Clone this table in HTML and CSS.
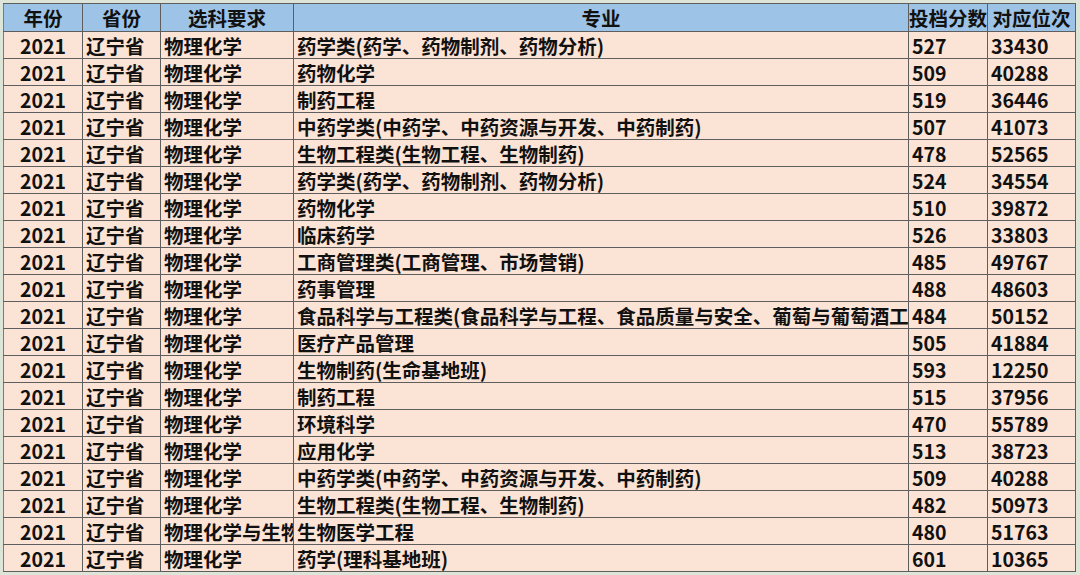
FILE: index.html
```html
<!DOCTYPE html>
<html lang="zh">
<head>
<meta charset="utf-8">
<link rel="stylesheet" href="styles.css">
</head>
<body>
<div class="frame">
<table class="sheet">
<colgroup>
<col class="c1"><col class="c2"><col class="c3"><col class="c4"><col class="c5"><col class="c6">
</colgroup>
<thead>
<tr><th>年份</th><th>省份</th><th>选科要求</th><th>专业</th><th>投档分数</th><th>对应位次</th></tr>
</thead>
<tbody>
<tr><td class="yr">2021</td><td>辽宁省</td><td>物理化学</td><td>药学类(药学、药物制剂、药物分析)</td><td>527</td><td>33430</td></tr>
<tr><td class="yr">2021</td><td>辽宁省</td><td>物理化学</td><td>药物化学</td><td>509</td><td>40288</td></tr>
<tr><td class="yr">2021</td><td>辽宁省</td><td>物理化学</td><td>制药工程</td><td>519</td><td>36446</td></tr>
<tr><td class="yr">2021</td><td>辽宁省</td><td>物理化学</td><td>中药学类(中药学、中药资源与开发、中药制药)</td><td>507</td><td>41073</td></tr>
<tr><td class="yr">2021</td><td>辽宁省</td><td>物理化学</td><td>生物工程类(生物工程、生物制药)</td><td>478</td><td>52565</td></tr>
<tr><td class="yr">2021</td><td>辽宁省</td><td>物理化学</td><td>药学类(药学、药物制剂、药物分析)</td><td>524</td><td>34554</td></tr>
<tr><td class="yr">2021</td><td>辽宁省</td><td>物理化学</td><td>药物化学</td><td>510</td><td>39872</td></tr>
<tr><td class="yr">2021</td><td>辽宁省</td><td>物理化学</td><td>临床药学</td><td>526</td><td>33803</td></tr>
<tr><td class="yr">2021</td><td>辽宁省</td><td>物理化学</td><td>工商管理类(工商管理、市场营销)</td><td>485</td><td>49767</td></tr>
<tr><td class="yr">2021</td><td>辽宁省</td><td>物理化学</td><td>药事管理</td><td>488</td><td>48603</td></tr>
<tr><td class="yr">2021</td><td>辽宁省</td><td>物理化学</td><td>食品科学与工程类(食品科学与工程、食品质量与安全、葡萄与葡萄酒工程)</td><td>484</td><td>50152</td></tr>
<tr><td class="yr">2021</td><td>辽宁省</td><td>物理化学</td><td>医疗产品管理</td><td>505</td><td>41884</td></tr>
<tr><td class="yr">2021</td><td>辽宁省</td><td>物理化学</td><td>生物制药(生命基地班)</td><td>593</td><td>12250</td></tr>
<tr><td class="yr">2021</td><td>辽宁省</td><td>物理化学</td><td>制药工程</td><td>515</td><td>37956</td></tr>
<tr><td class="yr">2021</td><td>辽宁省</td><td>物理化学</td><td>环境科学</td><td>470</td><td>55789</td></tr>
<tr><td class="yr">2021</td><td>辽宁省</td><td>物理化学</td><td>应用化学</td><td>513</td><td>38723</td></tr>
<tr><td class="yr">2021</td><td>辽宁省</td><td>物理化学</td><td>中药学类(中药学、中药资源与开发、中药制药)</td><td>509</td><td>40288</td></tr>
<tr><td class="yr">2021</td><td>辽宁省</td><td>物理化学</td><td>生物工程类(生物工程、生物制药)</td><td>482</td><td>50973</td></tr>
<tr><td class="yr">2021</td><td>辽宁省</td><td>物理化学与生物</td><td>生物医学工程</td><td>480</td><td>51763</td></tr>
<tr><td class="yr">2021</td><td>辽宁省</td><td>物理化学</td><td>药学(理科基地班)</td><td>601</td><td>10365</td></tr>
</tbody>
</table>
</div>
</body>
</html>
```

FILE: styles.css
```css
html, body {
  margin: 0;
  padding: 0;
  background: #e4e8e2;
}
.frame {
  width: 1080px;
  height: 575px;
  overflow: hidden;
  padding: 3px 0 0 3px;
  box-sizing: border-box;
  background: #dde5d8;
}
.sheet {
  table-layout: fixed;
  border-collapse: collapse;
  width: 1072px;
  font-family: "Noto Sans CJK SC", "Microsoft YaHei", sans-serif;
  font-weight: 700;
  font-size: 19.5px;
  color: #111111;
  background: #fbe4d6;
}
.c1 { width: 79px; }
.c2 { width: 78px; }
.c3 { width: 133px; }
.c4 { width: 615px; }
.c5 { width: 79px; }
.c6 { width: 88px; }
.sheet th, .sheet td {
  border: 1px solid #5e5e5e;
  white-space: nowrap;
  overflow: hidden;
  padding: 0 0 0 3px;
  line-height: 25px;
  text-align: left;
}
.sheet th {
  height: 27px;
  background: #9dc3e6;
  text-align: center;
  padding: 0;
}
.sheet td {
  height: 26px;
}
.sheet td.yr {
  text-align: center;
  padding: 0;
}
.sheet th:first-child, .sheet td:first-child {
  border-left: 1px solid #7a7a7a;
}
```
